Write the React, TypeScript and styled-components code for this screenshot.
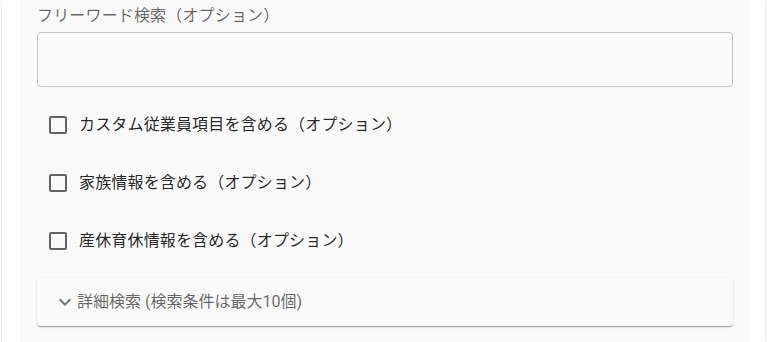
import React, { useState } from "react";
import styled, { createGlobalStyle } from "styled-components";

const GlobalStyle = createGlobalStyle`
  html, body {
    margin: 0;
    padding: 0;
    background: #ffffff;
    overflow: hidden;
  }
  body {
    font-family: Roboto, "Noto Sans CJK JP", "Noto Sans", sans-serif;
  }
`;

const options = [
  "カスタム従業員項目を含める（オプション）",
  "家族情報を含める（オプション）",
  "産休育休情報を含める（オプション）",
];

const App: React.FC = () => {
  const [checked, setChecked] = useState<boolean[]>(options.map(() => false));

  const toggle = (i: number) => {
    setChecked((prev) => prev.map((v, idx) => (idx === i ? !v : v)));
  };

  return (
    <>
      <GlobalStyle />
      <Card>
        <Panel>
          <FieldLabel>フリーワード検索（オプション）</FieldLabel>
          <TextField />
          <CheckList>
            {options.map((label, i) => (
              <CheckRow key={label} onClick={() => toggle(i)}>
                <CheckButton>
                  <Box $checked={checked[i]} />
                </CheckButton>
                <CheckText>{label}</CheckText>
              </CheckRow>
            ))}
          </CheckList>
          <Accordion>
            <AccordionSummary>
              <svg width="24" height="24" viewBox="0 0 24 24" fill="rgba(0,0,0,0.54)">
                <path d="M16.59 8.59 12 13.17 7.41 8.59 6 10l6 6 6-6z" />
              </svg>
              <SummaryText>詳細検索 (検索条件は最大10個)</SummaryText>
            </AccordionSummary>
          </Accordion>
        </Panel>
      </Card>
    </>
  );
};

export default App;

const Card = styled.div`
  width: 763px;
  height: 100vh;
  margin-left: 2px;
  padding: 0 16px 0 18px;
  box-sizing: border-box;
  background: #ffffff;
  box-shadow: 0px 2px 1px -1px rgba(0, 0, 0, 0.2), 0px 1px 1px 0px rgba(0, 0, 0, 0.14),
    0px 1px 3px 0px rgba(0, 0, 0, 0.12);
`;

const Panel = styled.div`
  height: 100%;
  background: #fafafa;
  padding: 4px 16px 0 17px;
  box-sizing: border-box;
  display: flex;
  flex-direction: column;
`;

const FieldLabel = styled.div`
  font-size: 16px;
  line-height: 24px;
  color: rgba(0, 0, 0, 0.6);
  letter-spacing: 0.01em;
`;

const TextField = styled.textarea`
  margin-top: 4px;
  height: 55px;
  box-sizing: border-box;
  border: 1px solid #c4c4c4;
  border-radius: 4px;
  background: transparent;
  resize: none;
  outline: none;
  padding: 16px 14px;
  font: inherit;
`;

const CheckList = styled.div`
  margin-top: 17px;
  display: flex;
  flex-direction: column;
  gap: 16px;
`;

const CheckRow = styled.label`
  display: flex;
  align-items: center;
  height: 42px;
  cursor: pointer;
`;

const CheckButton = styled.span`
  width: 42px;
  height: 42px;
  display: flex;
  align-items: center;
  justify-content: center;
`;

const Box = styled.span<{ $checked: boolean }>`
  width: 18px;
  height: 18px;
  box-sizing: border-box;
  border: 2px solid rgba(0, 0, 0, 0.6);
  border-radius: 2px;
  background: ${(p) => (p.$checked ? "rgba(0, 0, 0, 0.6)" : "transparent")};
`;

const CheckText = styled.span`
  font-size: 16px;
  line-height: 24px;
  color: rgba(0, 0, 0, 0.87);
  letter-spacing: 0.01em;
`;

const Accordion = styled.div`
  margin-top: 16px;
  background: #fafafa;
  border-radius: 4px;
  box-shadow: 0px 2px 1px -1px rgba(0, 0, 0, 0.2), 0px 1px 1px 0px rgba(0, 0, 0, 0.14),
    0px 1px 3px 0px rgba(0, 0, 0, 0.12);
`;

const AccordionSummary = styled.div`
  height: 48px;
  display: flex;
  align-items: center;
  padding: 0 16px;
  cursor: pointer;
`;

const SummaryText = styled.span`
  font-size: 16px;
  line-height: 24px;
  color: rgba(0, 0, 0, 0.6);
`;
